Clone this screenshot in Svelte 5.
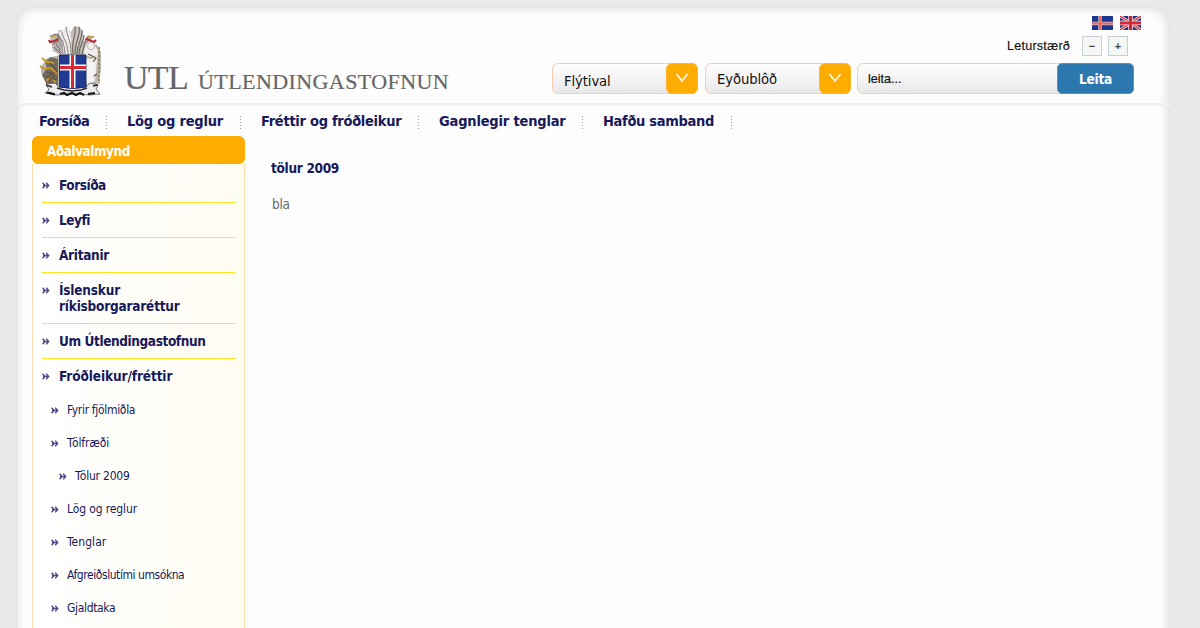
<script>
  const nav = [
    { label: 'Forsíða', w: 88, ls: -0.5 },
    { label: 'Lög og reglur', w: 134, ls: -0.22 },
    { label: 'Fréttir og fróðleikur', w: 178, ls: -0.28 },
    { label: 'Gagnlegir tenglar', w: 164, ls: -0.18 },
    { label: 'Hafðu samband', w: 149, ls: -0.32 }
  ];
  const main = [
    { label: 'Forsíða', ls: -0.45 },
    { label: 'Leyfi', ls: -0.5 },
    { label: 'Áritanir', ls: -0.3 },
    { label: 'Íslenskur ríkisborgararéttur', ls: -0.2, wrap: true },
    { label: 'Um Útlendingastofnun', ls: -0.4 },
    { label: 'Fróðleikur/fréttir', ls: -0.1 }
  ];
  const sub = [
    { label: 'Fyrir fjölmiðla', ls: -0.32 },
    { label: 'Tölfræði', ls: -0.12 },
    { label: 'Tölur 2009', ls: -0.22, deep: true },
    { label: 'Lög og reglur', ls: -0.12 },
    { label: 'Tenglar', ls: 0.05 },
    { label: 'Afgreiðslutími umsókna', ls: -0.44 },
    { label: 'Gjaldtaka', ls: -0.33 }
  ];
</script>

{#snippet arrows()}
  <svg class="arrows" width="8" height="7" viewBox="0 0 8 7"><path d="M.6.7 3 3.5.6 6.3M4.2.7 6.7 3.5 4.2 6.3M1 3.5h5" fill="none" stroke="#4b4b88" stroke-width="1.4" /></svg>
{/snippet}

<div class="window">
  <div class="page">
    <header>
      <svg class="crest" width="66" height="74" viewBox="0 0 66 74">
        <path d="M22 30 15 26 14 21 21 17 19 10 21 5 27 6 28 1 33 7 36 1 42 2 45 8 44 15 51 17 59 20 63 27 63 45 59 60 43 63H21L9 60 3 48 3 42 9 33Z" fill="#b9b7b6" />
        <path d="m20 7 6-1 3-5 4 7 1 21H22l4-12zM46 25l3-7 6-1 5 9-3 30-8 4z" fill="#eeedec" />
        <path d="m34 10 3-8 5 1 2 9-3 18h-8z" fill="#cbc6c1" />
        <path d="M28 2c0 8 5 11 5 27M24 7c0 6 6 9 6 22M20 8c0 6 7 8 7 21M19 13c1 5 6 6 6 16" stroke="#85807c" stroke-width="1" fill="none" />
        <path d="M37 2c2 7-4 12-2 27M41 2c2 9-4 12-4 27M44 5c1 9-5 13-5 24M46 10c0 7-5 10-5 19" stroke="#776c61" stroke-width="1.3" fill="none" />
        <path d="m16 22 7 7M18 19l6 9M47 17l-3 12" stroke="#6c625b" fill="none" />
        <path d="m12 11 6-2 3 4-1 4-6 3M56 12l-6-1-3 4 2 3" fill="#bbb5af" stroke="#756656" stroke-width="1" />
        <path d="m11 15 1 2 5-1 3-2M58 15l-2 2-5-2-3-1" fill="none" stroke="#b02a33" stroke-width="2.2" />
        <path d="M13 11h5M50 12h6" stroke="#d0a236" stroke-width="1.5" />
        <path d="m7 37 6-5 7 2v27L9 60 4 50l5-7z" fill="#74695a" />
        <path d="m2 41 4 3 7-1 6 6M4 33l5 4 7 1M9 56l2-4 7 5" fill="none" stroke="#c99a25" stroke-width="2" />
        <path d="m8 47 8 1-7 4 10 3M12 38l7 8M11 57l6-7M50 29l8 4-5 7M51 54l8-5" fill="none" stroke="#59514a" stroke-width="1.2" />
        <circle cx="53" cy="21" r="3.7" fill="#f2efec" stroke="#a8a19b" stroke-width=".7" />
        <path d="m48 36 9 1-2 20-6 2z" fill="#f5f4f2" />
        <path d="M61 22v37M47 32l8 1" stroke="#b6a16d" stroke-width="1.4" />
        <path d="M61 22v36" stroke="#555" stroke-width=".8" stroke-dasharray="2 2" />
        <path d="m8 59 9-1 4 4 14 1 13-1 4-4 8 2-2 4 4 5-10 1-16-1-18 1-11-2 4-3z" fill="#ececec" stroke="#555" stroke-width=".8" />
        <path d="M9 68c5-1 4 2 8 1m5 0 4-1 3 2 5-2 4 2 4-2 4 2m4-1 7-1" fill="none" stroke="#161616" stroke-width="2.2" />
        <path d="m8 60 6 2M55 61l5-1M19 63l7 2 8 1 9-1 6-2" fill="none" stroke="#292929" stroke-width="1.4" />
        <path d="M21.500 30H48v32q-13 3-26.500 0z" fill="#203b91" stroke="#18244f" stroke-width=".8" />
        <path d="M34.500 30v33M22 42.500h26" stroke="#fff" stroke-width="6" />
        <path d="M34.500 30v33M22 42.500h26" stroke="#dc2735" stroke-width="3" />
      </svg>
      <div class="brand"><span class="big">UTL</span><span class="small">ÚTLENDINGASTOFNUN</span></div>
      <div class="tools">
        <div class="flags">
          <svg width="21" height="14" viewBox="0 0 21 14"><path fill="#1c3591" d="M0 0h21v14H0z" /><path d="M8 0v14M0 7.500h21" stroke="#b9bfe0" stroke-width="3.600" /><path d="M8 0v14M0 7.500h21" stroke="#ef694f" stroke-width="2.200" /></svg>
          <svg width="21" height="14" viewBox="0 0 21 14"><path fill="#242f82" d="M0 0h21v14H0z" /><path d="m0 0 21 14M21 0 0 14" stroke="#eee" stroke-width="3" /><path d="m0 0 21 14M21 0 0 14" stroke="#d44b52" stroke-width="1.600" /><path d="M10.500 0v14M0 7h21" stroke="#f2dfe4" stroke-width="4.500" /><path d="M10.500 0v14M0 7h21" stroke="#d42736" stroke-width="3" /></svg>
        </div>
        <div class="sizes"><span>Leturstærð</span><button aria-label="Minni">−</button><button aria-label="Stærri">+</button></div>
        <div class="controls">
          {#each ['Flýtival', 'Eyðublôð'] as label, i}
            <div class="select" class:raised={i === 1}><span>{label}</span><b><svg width="14" height="10" viewBox="0 0 14 10"><path d="m1.500 1 5.500 7L12.500 1" fill="none" stroke="#fff4d8" stroke-width="1.9" /></svg></b></div>
          {/each}
          <div class="search"><span>leita...</span><button>Leita</button></div>
        </div>
      </div>
    </header>
    <nav>
      {#each nav as item}
        <a href="#top" style:width="{item.w}px"><span style:letter-spacing="{item.ls}px">{item.label}</span><i></i></a>
      {/each}
    </nav>
    <div class="body">
      <aside>
        <h2>Aðalvalmynd</h2>
        <div class="menu">
          <ul class="main">
            {#each main as item}
              <li class:wrap={item.wrap}>{@render arrows()}<span style:letter-spacing="{item.ls}px">{item.label}</span></li>
            {/each}
          </ul>
          <ul class="sub">
            {#each sub as item}
              <li class:deep={item.deep}>{@render arrows()}<span style:letter-spacing="{item.ls}px">{item.label}</span></li>
            {/each}
          </ul>
        </div>
      </aside>
      <main>
        <h1>tölur 2009</h1>
        <p>bla</p>
      </main>
    </div>
  </div>
</div>

<style>
  :global(body) { margin: 0; background: #e9e9e9; }
  * { box-sizing: border-box; }
  .window { height: 628px; padding: 8px 0 0 17px; overflow: hidden; }
  .page { width: 1151px; height: 660px; border-radius: 18px; background: #fdfdfd; box-shadow: inset 0 0 8px 1px #dedede, 0 0 5px #e2e2e2; font-family: "DejaVu Sans Condensed", "DejaVu Sans", sans-serif; font-stretch: condensed; color: #17195a; }
  header { display: flex; height: 98px; width: 1153px; padding-left: 21px; border-bottom: 3px solid #f0f0f0; }
  .crest { margin-top: 17px; flex: none; }
  .brand { display: flex; align-items: baseline; margin: 50px 0 0 20px; height: 40px; width: 330px; font-family: "Liberation Serif", serif; color: #666; white-space: nowrap; line-height: 40px; flex: none; }
  .big { font-size: 34px; width: 74px; letter-spacing: -0.7px; -webkit-text-stroke: .2px #666; }
  .small { font-size: 22px; letter-spacing: 0.42px; -webkit-text-stroke: .2px #666; }
  .tools { display: flex; flex-direction: column; margin-left: auto; margin-right: 36px; }
  .flags { display: flex; justify-content: flex-end; gap: 7px; height: 14px; margin: 8px -7px 0 0; }
  .sizes { display: flex; justify-content: flex-end; gap: 6px; margin: 6px 6px 0 0; height: 20px; color: #111; }
  .sizes span { margin-right: 6px; font: 12.6px/20px "Liberation Sans", sans-serif; letter-spacing: .2px; -webkit-text-stroke: .15px #111; }
  .sizes button { width: 20px; height: 20px; padding: 0; border: 1px solid #c8cfd3; background: #f5f7f7; color: #444; font: bold 11px/16px "Liberation Sans", sans-serif; }
  .controls { display: flex; gap: 6px; margin-top: 7px; height: 31px; }
  .select, .search { display: flex; justify-content: space-between; width: 146px; height: 31px; border: 1px solid #f5cdb1; border-radius: 6px; background: linear-gradient(#fefefe, #e9e9e9); color: #111; }
  .select:first-child { margin-right: 1px; }
  .select span { padding: 4px 0 0 11px; font: 13.2px/27px "DejaVu Sans", sans-serif; letter-spacing: -.1px; }
  .select.raised span { padding-top: 2px; }
  .select b { display: flex; align-items: center; justify-content: center; width: 32px; height: 31px; margin: -1px; border: 1px solid #ffb72e; border-radius: 6px; background: #ffac00; }
  .select svg { margin-top: -1px; }
  .search { width: 277px; }
  .search span { padding: 1px 0 0 10px; font: 12.6px/28px "Liberation Sans", sans-serif; -webkit-text-stroke: .2px #111; }
  .search button { width: 77px; height: 31px; margin: -1px; padding: 0; border: 1px solid #5b93bc; border-radius: 5px; background: #2c77ad; color: #fff; font: bold 13.5px/28px "DejaVu Sans Condensed", "DejaVu Sans", sans-serif; letter-spacing: -.2px; }
  nav { display: flex; height: 30px; padding-left: 22px; }
  nav a { display: flex; justify-content: space-between; flex: none; padding-right: 18px; color: inherit; text-decoration: none; font-size: 14.5px; font-weight: bold; line-height: 31px; white-space: nowrap; }
  nav i { width: 1px; height: 13px; margin: 10px 2px 0 0; background: repeating-linear-gradient(#999 0 1px, transparent 1px 3px); }
  .body { display: flex; padding-left: 15px; }
  aside { width: 213px; flex: none; }
  h2 { height: 28px; margin: 0; padding-left: 15px; border-radius: 6px; background: #ffac00; color: #fff; font-size: 13.3px; line-height: 31px; letter-spacing: -.37px; }
  .menu { height: 500px; padding: 4px 9px 0; border: solid #ffdcae; border-width: 0 1px; background: linear-gradient(90deg, #fff, #fffdf2); }
  ul { margin: 0; padding: 0; list-style: none; }
  li { display: flex; }
  .arrows { flex: none; }
  .main li { height: 35px; padding-top: 10px; background: repeating-linear-gradient(90deg, #f8ce12 0 1px, #fdf0a5 1px 2px) left bottom / 193px 1px no-repeat; font-weight: bold; font-size: 13.5px; line-height: 15.5px; white-space: nowrap; }
  .main li:last-child { background: none; }
  .main .arrows { margin: 4px 9px 0 0; }
  .main .wrap { height: 51px; white-space: normal; }
  .wrap span { width: 125px; }
  .sub { padding-left: 9px; }
  .sub li { height: 33px; font-size: 12px; line-height: 33px; white-space: nowrap; }
  .sub .arrows { margin: 13px 8px 0 0; }
  .sub .deep { padding-left: 8px; }
  main { padding: 24px 0 0 26px; }
  h1 { margin: 0; font-size: 13.5px; line-height: 16px; letter-spacing: -.3px; }
  p { margin: 20px 0 0 1px; font-size: 13.5px; line-height: 17px; letter-spacing: -.3px; color: #666; }
</style>
